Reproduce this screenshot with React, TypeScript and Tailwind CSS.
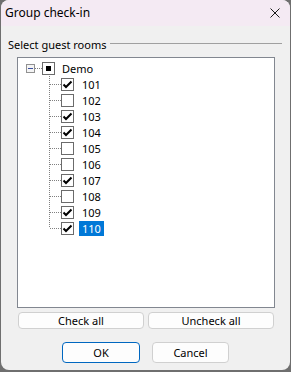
import React from 'react';

const rooms = [
  { id: '101', checked: true },
  { id: '102', checked: false },
  { id: '103', checked: true },
  { id: '104', checked: true },
  { id: '105', checked: false },
  { id: '106', checked: false },
  { id: '107', checked: true },
  { id: '108', checked: false },
  { id: '109', checked: true },
  { id: '110', checked: true },
];

function CheckBox({ state }: { state: 'on' | 'off' | 'partial' }) {
  return (
    <div className="w-[13px] h-[13px] border border-[#6b6b6b] bg-white flex items-center justify-center shrink-0">
      {state === 'on' && (
        <svg width="11" height="11" viewBox="0 0 11 11">
          <path d="M1.5 5.5 L4 8 L9.5 2.5" fill="none" stroke="#000" strokeWidth="2" />
        </svg>
      )}
      {state === 'partial' && <div className="w-[5px] h-[5px] bg-black" />}
    </div>
  );
}

function Connector({ last }: { last: boolean }) {
  return (
    <svg width="12" height="16" className="shrink-0">
      <line x1="0.5" y1="0" x2="0.5" y2={last ? 8 : 16} stroke="#808080" strokeDasharray="1 1" />
      <line x1="1" y1="8.5" x2="12" y2="8.5" stroke="#808080" strokeDasharray="1 1" />
    </svg>
  );
}

export default function App() {
  const font = { fontFamily: '"Noto Sans", "Segoe UI", sans-serif' };

  return (
    <div className="w-[291px] h-[372px] bg-[#6f6f6f] overflow-hidden" style={font}>
      <div className="ml-px w-[289px] h-[370px] rounded-[8px] bg-[#f0f0f0] overflow-hidden flex flex-col text-[11px] text-black">
        {/* title bar */}
        <div className="h-[26px] bg-[#f4eaf3] flex items-center justify-between pl-[4px] pr-[10px] shrink-0">
          <span className="leading-none text-[12px]">Group check-in</span>
          <svg width="10" height="10" viewBox="0 0 10 10">
            <path d="M0.5 0.5 L9.5 9.5 M9.5 0.5 L0.5 9.5" stroke="#1a1a1a" strokeWidth="1" />
          </svg>
        </div>

        <div className="flex-1 flex flex-col pl-[7px] pr-[8px]">
          {/* group label */}
          <div className="h-[31px] pt-[5px] flex items-center">
            <span className="leading-none">Select guest rooms</span>
            <div className="flex-1 ml-[4px] h-[2px] border-t border-[#a0a0a0] border-b-white" />
          </div>

          {/* tree */}
          <div className="ml-[9px] mr-[7px] h-[251px] border border-[#828790] bg-white pt-[2px]">
            <div className="h-[16px] flex items-center pl-[8px]">
              <div className="w-[9px] h-[9px] border border-[#919191] bg-[#f4f4f4] flex items-center justify-center shrink-0">
                <div className="w-[5px] h-px bg-[#3b4fa0]" />
              </div>
              <div className="w-[7px] border-t border-dotted border-[#808080]" />
              <CheckBox state="partial" />
              <span className="ml-[4px] px-[3px] leading-[15px]">Demo</span>
            </div>
            {rooms.map((r, i) => (
              <div key={r.id} className="h-[16px] flex items-center pl-[31px]">
                <Connector last={i === rooms.length - 1} />
                <CheckBox state={r.checked ? 'on' : 'off'} />
                <span
                  className={
                    i === rooms.length - 1
                      ? 'ml-[5px] px-[3px] h-[15px] leading-[15px] bg-[#0078d7] text-white'
                      : 'ml-[5px] px-[3px] h-[15px] leading-[15px]'
                  }
                >
                  {r.id}
                </span>
              </div>
            ))}
          </div>

          {/* check buttons */}
          <div className="mt-[4px] ml-[10px] flex gap-[4px]">
            <button className="w-[126px] h-[17px] rounded-[4px] border border-[#d0d0d0] bg-[#fdfdfd] leading-none">
              Check all
            </button>
            <button className="w-[126px] h-[17px] rounded-[4px] border border-[#d0d0d0] bg-[#fdfdfd] leading-none">
              Uncheck all
            </button>
          </div>

          {/* dialog buttons */}
          <div className="mt-[13px] ml-[54px] flex gap-[12px]">
            <button className="w-[78px] h-[21px] rounded-[4px] border border-[#0067c0] bg-[#fdfdfd] leading-none">
              OK
            </button>
            <button className="w-[77px] h-[21px] rounded-[4px] border border-[#d0d0d0] bg-[#fdfdfd] leading-none">
              Cancel
            </button>
          </div>
        </div>
      </div>
    </div>
  );
}
